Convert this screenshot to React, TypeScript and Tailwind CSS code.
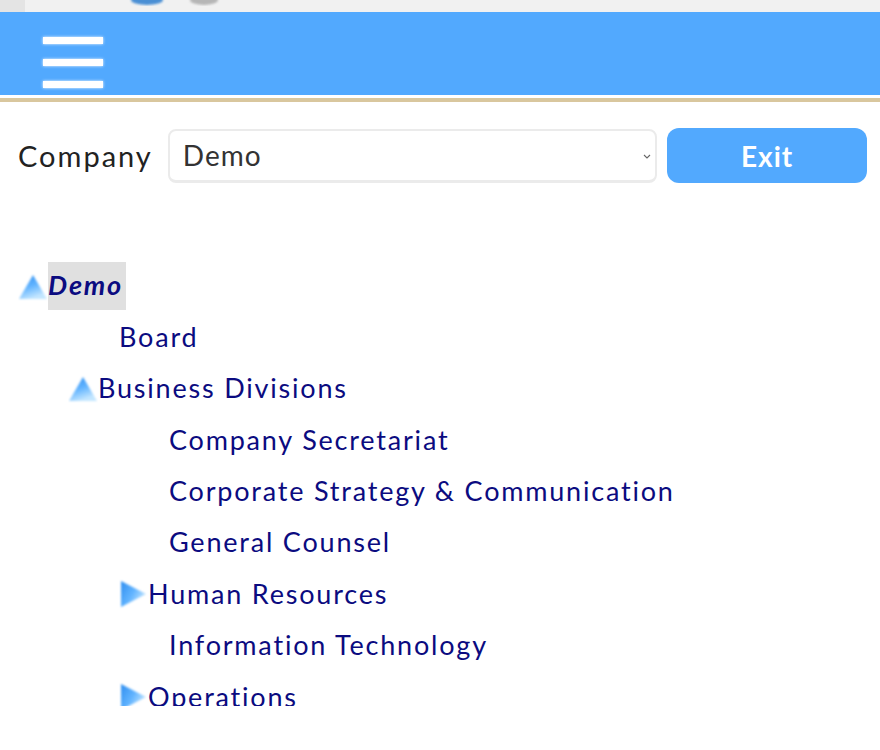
import { useState } from "react";

type Node = {
  label: string;
  level: number;
  state?: "open" | "closed";
  active?: boolean;
};

const nodes: Node[] = [
  { label: "Demo", level: 0, state: "open", active: true },
  { label: "Board", level: 1 },
  { label: "Business Divisions", level: 1, state: "open" },
  { label: "Company Secretariat", level: 2 },
  { label: "Corporate Strategy & Communication", level: 2 },
  { label: "General Counsel", level: 2 },
  { label: "Human Resources", level: 2, state: "closed" },
  { label: "Information Technology", level: 2 },
  { label: "Operations", level: 2, state: "closed" },
];

const font = { fontFamily: "Lato, 'Open Sans', sans-serif" };

const Arrow = ({ dir }: { dir: "open" | "closed" }) => (
  <svg width="30" height="30" viewBox="0 0 30 30" className="shrink-0">
    <defs>
      <linearGradient id={"g" + dir} x1="0" y1="0" x2={dir === "open" ? "0.4" : "1"} y2={dir === "open" ? "1" : "0.6"}>
        <stop offset="0" stopColor="#2f8ef0" />
        <stop offset="0.55" stopColor="#62b4ff" />
        <stop offset="1" stopColor="#c3e6ff" />
      </linearGradient>
      <filter id={"b" + dir}>
        <feGaussianBlur stdDeviation="0.9" />
      </filter>
    </defs>
    {dir === "open" ? (
      <polygon points="15,4 29,28 1,28" fill={`url(#g${dir})`} filter={`url(#b${dir})`} />
    ) : (
      <polygon points="3,2 28,15 3,28" fill={`url(#g${dir})`} filter={`url(#b${dir})`} />
    )}
  </svg>
);

export default function App() {
  const [company, setCompany] = useState("Demo");

  return (
    <div className="w-[880px] h-[750px] bg-white overflow-hidden" style={font}>
      <div className="h-[12px] bg-[#f1f1f1] flex">
        <div className="w-[25px] bg-[#e4e4e4]" />
        <svg width="200" height="12" className="ml-[95px]">
          <defs>
            <filter id="lb">
              <feGaussianBlur stdDeviation="1.2" />
            </filter>
          </defs>
          <ellipse cx="27" cy="0" rx="16" ry="5" fill="#2d7fd0" opacity="0.85" filter="url(#lb)" />
          <ellipse cx="84" cy="0" rx="14" ry="5" fill="#a8a8a8" opacity="0.8" filter="url(#lb)" />
        </svg>
      </div>
      <div className="h-[83px] bg-[#52a9fe] flex items-start pt-[25px] pl-[43px]">
        <div className="flex flex-col gap-[15px]">
          <span className="block w-[60px] h-[7px] bg-white shadow-[0_0_3px_#ffffff]" />
          <span className="block w-[60px] h-[7px] bg-white shadow-[0_0_3px_#ffffff]" />
          <span className="block w-[60px] h-[7px] bg-white shadow-[0_0_3px_#ffffff]" />
        </div>
      </div>
      <div className="h-[3px]" />
      <div className="h-[4px] bg-[#d9c79e]" />

      <div className="flex items-center mt-[26px] pl-[18px] pr-[13px] h-[55px]">
        <span className="text-[29px] tracking-[2px] text-[#222] w-[150px]">Company</span>
        <div className="relative w-[490px] h-[54px]">
          <select
            value={company}
            onChange={(e) => setCompany(e.target.value)}
            className="appearance-none w-full h-full rounded-[8px] border-2 border-[#ebebeb] border-b-[3px] bg-white pl-[13px] text-[28px] tracking-[1px] text-[#333] outline-none"
            style={font}
          >
            <option>Demo</option>
          </select>
          <svg width="8" height="5" viewBox="0 0 8 5" className="absolute right-[6px] top-[25px]">
            <path d="M1 1 L4 4 L7 1" stroke="#666" strokeWidth="1.1" fill="none" />
          </svg>
        </div>
        <button className="ml-[10px] w-[200px] h-[55px] rounded-[12px] bg-[#52a9fe] text-white text-[28px] tracking-[1px] font-bold">
          Exit
        </button>
      </div>

      <div className="mt-[77px] h-[446px] overflow-hidden">
        {nodes.map((n) => (
          <div
            key={n.label}
            className="h-[51.4px] flex items-center text-[27px] tracking-[1.8px] text-[#0b0b80]"
            style={{ paddingLeft: 18 + n.level * 50 }}
          >
            {n.state ? <Arrow dir={n.state} /> : <span className="w-[51px] shrink-0" />}
            <span
              className={
                n.active
                  ? "bg-[#e0e0e0] italic font-bold h-[48px] flex items-center pr-[3px]"
                  : ""
              }
            >
              {n.label}
            </span>
          </div>
        ))}
      </div>
    </div>
  );
}
